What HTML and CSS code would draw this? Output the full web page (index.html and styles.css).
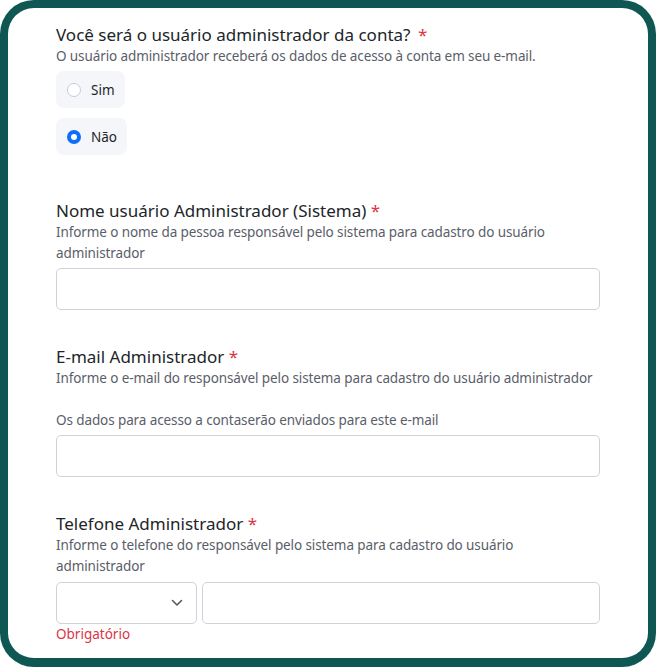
FILE: index.html
```html
<!DOCTYPE html>
<html lang="pt-BR">
<head>
<meta charset="utf-8">
<link rel="stylesheet" href="styles.css">
</head>
<body>
<div class="frame">
  <section class="field first">
    <h2 class="label">Você será o usuário administrador da conta? <span class="req wide">*</span></h2>
    <p class="help">O usuário administrador receberá os dados de acesso à conta em seu e-mail.</p>
    <div class="options">
      <label class="option"><span class="radio"></span><span>Sim</span></label>
      <label class="option"><span class="radio checked"></span><span>Não</span></label>
    </div>
  </section>

  <section class="field after-radio">
    <h2 class="label">Nome usuário Administrador (Sistema) <span class="req">*</span></h2>
    <p class="help">Informe o nome da pessoa responsável pelo sistema para cadastro do usuário administrador</p>
    <div class="input"></div>
  </section>

  <section class="field">
    <h2 class="label">E-mail Administrador <span class="req">*</span></h2>
    <p class="help">Informe o e-mail do responsável pelo sistema para cadastro do usuário administrador</p>
    <p class="help note">Os dados para acesso a contaserão enviados para este e-mail</p>
    <div class="input"></div>
  </section>

  <section class="field">
    <h2 class="label">Telefone Administrador <span class="req">*</span></h2>
    <p class="help">Informe o telefone do responsável pelo sistema para cadastro do usuário administrador</p>
    <div class="phone">
      <div class="select">
        <svg class="chev" width="12" height="8" viewBox="0 0 12 8"><path d="M1.5 1.5 L6 6 L10.5 1.5" fill="none" stroke="#555a66" stroke-width="1.6" stroke-linecap="round" stroke-linejoin="round"/></svg>
      </div>
      <div class="input grow"></div>
    </div>
    <p class="error">Obrigatório</p>
  </section>
</div>
</body>
</html>
```

FILE: styles.css
```css
* { box-sizing: border-box; }
html, body { margin: 0; padding: 0; background: #fff; }
body {
  font-family: "Noto Sans", "Open Sans", sans-serif;
  color: #212529;
}
.frame {
  width: 656px;
  height: 667px;
  border: 8px solid #0f5752;
  border-bottom-width: 9px;
  border-radius: 34px;
  background: #fff;
  padding: 16px 48px 0 48px;
  overflow: hidden;
}
.field { margin-top: 36px; }
.field.first { margin-top: 0; }
.field.after-radio { margin-top: 45px; }
.label {
  margin: 0;
  font-size: 17px;
  font-weight: 400;
  line-height: 22px;
  color: #212529;
}
.req { color: #dc3545; }
.req.wide { margin-left: 3px; }
.help {
  margin: 0;
  font-size: 13.5px;
  letter-spacing: -0.1px;
  line-height: 21px;
  color: #5a5e69;
}
.help.note { margin-top: 21px; }
.options {
  display: flex;
  flex-direction: column;
  align-items: flex-start;
  gap: 10px;
  margin-top: 4px;
}
.option {
  display: flex;
  align-items: center;
  gap: 10px;
  height: 37px;
  padding: 0 10px 0 11px;
  background: #f5f6fa;
  border-radius: 8px;
  font-size: 13.5px;
  color: #212529;
}
.radio {
  width: 14px;
  height: 14px;
  border-radius: 50%;
  border: 1px solid #c9cbd3;
  background: #fff;
}
.radio.checked {
  border: 4px solid #0d6efd;
  background: #fff;
}
.input {
  height: 42px;
  margin-top: 4px;
  border: 1px solid #cfd2da;
  border-radius: 5px;
  background: #fff;
}
.phone {
  display: flex;
  gap: 5px;
  margin-top: 5px;
}
.phone .input { margin-top: 0; height: 42px; }
.grow { flex: 1; }
.select {
  width: 141px;
  height: 42px;
  border: 1px solid #cfd2da;
  border-radius: 5px;
  display: flex;
  align-items: center;
  justify-content: flex-end;
  padding-right: 13px;
}
.error {
  margin: 0;
  font-size: 13.5px;
  line-height: 21px;
  color: #dc3545;
}
```
